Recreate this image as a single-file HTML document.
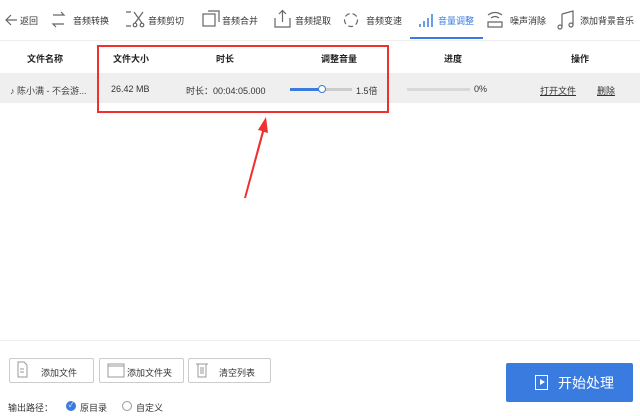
<!DOCTYPE html><html><head><meta charset="utf-8"><style>
*{margin:0;padding:0;box-sizing:border-box}
body{width:640px;height:416px;background:#fff;font-family:"Liberation Sans","Noto Sans CJK SC",sans-serif;font-size:9px;color:#333;position:relative;overflow:hidden}
.a{position:absolute;white-space:nowrap}
.b{font-weight:bold;color:#222}
.btn{position:absolute;top:358px;height:25px;border:1px solid #ccc;background:#fff;border-radius:2px}
</style></head><body>
<div class="a" style="left:0;top:40px;width:640px;height:1px;background:#eee"></div>
<div class="a" style="left:410px;top:37px;width:73px;height:2px;background:#3a7be0"></div>
<svg class="a" style="left:0;top:0" width="640" height="40" fill="none" stroke="#666" stroke-width="1.2">
<path d="M17 20H7M11 15l-5 5 5 5"/>
<path d="M53 15h11l-3-3M64 24h-11l3 3"/>
<path d="M126 12h5M126 26h5M134 12l8 11M143 12l-8 11"/><circle cx="135" cy="25" r="1.8"/><circle cx="142" cy="25" r="1.8"/>
<rect x="203" y="14" width="12" height="12"/><path d="M208 11h11v11"/>
<path d="M275 18v9h15v-9M282.5 11v11M279 14l3.5-3.5 3.5 3.5"/>
<circle cx="351" cy="20" r="6.5" stroke-dasharray="5 3"/>
<path d="M420 27v-3M424 27v-6M428 27v-9M432 27v-13" stroke="#3a7be0" stroke-width="1.5"/>
<path d="M488 15q7-5 14 0M491 18q4-3 8 0M488 22h14v5h-14z"/>
<path d="M562 14l11-3v14M562 14v13"/><circle cx="560" cy="27" r="2"/><circle cx="571" cy="25" r="2"/>
</svg>
<div class="a" style="left:20px;top:14px">返回</div>
<div class="a" style="left:73px;top:14px">音频转换</div>
<div class="a" style="left:148px;top:14px">音频剪切</div>
<div class="a" style="left:222px;top:14px">音频合并</div>
<div class="a" style="left:295px;top:14px">音频提取</div>
<div class="a" style="left:366px;top:14px">音频变速</div>
<div class="a" style="left:438px;top:14px;color:#3a7be0">音量调整</div>
<div class="a" style="left:510px;top:14px">噪声消除</div>
<div class="a" style="left:580px;top:14px">添加背景音乐</div>

<div class="a b" style="left:27px;top:52px">文件名称</div>
<div class="a b" style="left:113px;top:52px">文件大小</div>
<div class="a b" style="left:216px;top:52px">时长</div>
<div class="a b" style="left:321px;top:52px">调整音量</div>
<div class="a b" style="left:444px;top:52px">进度</div>
<div class="a b" style="left:571px;top:52px">操作</div>

<div class="a" style="left:0;top:73px;width:640px;height:30px;background:#efefef"></div>
<div class="a" style="left:10px;top:84px;color:#444">♪ 陈小满 - 不会游...</div>
<div class="a" style="left:111px;top:84px">26.42 MB</div>
<div class="a" style="left:186px;top:84px">时长：00:04:05.000</div>
<div class="a" style="left:290px;top:88px;width:62px;height:3px;background:#ccc"></div>
<div class="a" style="left:290px;top:88px;width:32px;height:3px;background:#3a7be0"></div>
<div class="a" style="left:318px;top:85px;width:8px;height:8px;border:1px solid #3a7be0;border-radius:50%;background:#fff"></div>
<div class="a" style="left:356px;top:84px">1.5倍</div>
<div class="a" style="left:407px;top:88px;width:63px;height:3px;background:#d8d8d8"></div>
<div class="a" style="left:474px;top:84px">0%</div>
<div class="a" style="left:540px;top:84px;text-decoration:underline">打开文件</div>
<div class="a" style="left:597px;top:84px;text-decoration:underline">删除</div>

<div class="a" style="left:97px;top:45px;width:292px;height:68px;border:2px solid #f03030"></div>
<svg class="a" style="left:0;top:0" width="640" height="416"><path d="M244 198L262 131L258 130L266 117L268 133L264 132L246 198Z" fill="#f03030"/></svg>

<div class="a" style="left:0;top:340px;width:640px;height:1px;background:#eee"></div>
<div class="btn" style="left:9px;width:85px"></div>
<div class="btn" style="left:99px;width:85px"></div>
<div class="btn" style="left:188px;width:83px"></div>
<svg class="a" style="left:0;top:355px" width="300" height="30" fill="none" stroke="#999" stroke-width="1"><path d="M18 7h6l3 3v12h-9z M20 14h4M20 17h4"/><path d="M108 9h16v13h-16zM108 11h16"/><path d="M198 9h8v13h-8zM196 9h12M201 12v7M203 12v7"/></svg>
<div class="a" style="left:41px;top:366px">添加文件</div>
<div class="a" style="left:127px;top:366px">添加文件夹</div>
<div class="a" style="left:219px;top:366px">清空列表</div>
<div class="a" style="left:8px;top:401px">输出路径：</div>
<div class="a" style="left:66px;top:401px;width:10px;height:10px;border-radius:50%;background:#3a7be0;color:#fff;font-size:7px;text-align:center;line-height:10px">✓</div>
<div class="a" style="left:80px;top:401px">原目录</div>
<div class="a" style="left:122px;top:401px;width:10px;height:10px;border-radius:50%;border:1px solid #999"></div>
<div class="a" style="left:136px;top:401px">自定义</div>
<div class="a" style="left:506px;top:363px;width:127px;height:39px;background:#3a7be0;border-radius:2px"></div>
<div class="a" style="left:535px;top:375px;width:13px;height:15px;border:1.5px solid #fff"></div>
<div class="a" style="left:540px;top:379px;width:0;height:0;border-left:5px solid #fff;border-top:3.5px solid transparent;border-bottom:3.5px solid transparent"></div>
<div class="a" style="left:558px;top:373px;color:#fff;font-size:14px">开始处理</div>
</body></html>
